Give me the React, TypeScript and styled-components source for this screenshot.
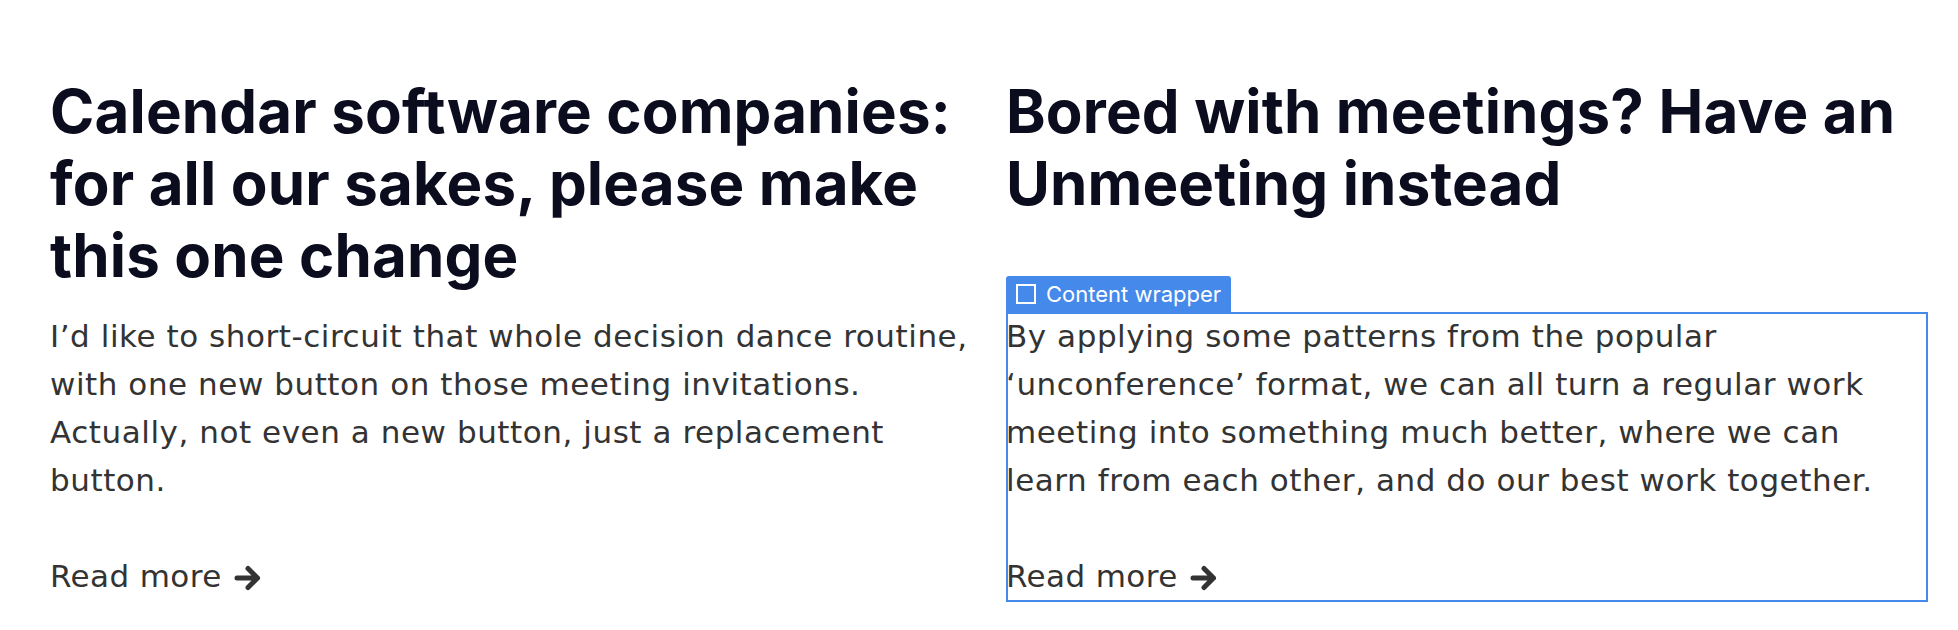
import React from "react";
import styled, { createGlobalStyle } from "styled-components";

const GlobalStyle = createGlobalStyle`
  html, body {
    margin: 0;
    padding: 0;
    background: #ffffff;
  }
  body {
    font-family: "DejaVu Sans", "Noto Sans", sans-serif;
    -webkit-font-smoothing: antialiased;
  }
  * { box-sizing: border-box; }
`;

const Page = styled.main`
  width: 1958px;
  padding: 75px 30px 0 50px;
`;

const Grid = styled.section`
  display: grid;
  grid-template-columns: 922px 922px;
  column-gap: 34px;
`;

const Card = styled.article`
  display: flex;
  flex-direction: column;
  min-width: 0;
`;

const Title = styled.h2`
  margin: 0 0 21px;
  font-family: "Inter", "Open Sans", sans-serif;
  font-weight: 700;
  font-size: 60px;
  line-height: 72px;
  letter-spacing: 0.15px;
  color: #0b0c1e;
`;

const ContentWrapper = styled.div<{ $selected?: boolean }>`
  position: relative;
  margin-top: auto;
  display: flex;
  flex-direction: column;
  width: 100%;
  padding-bottom: 2px;

  &::after {
    content: "";
    display: ${(p) => (p.$selected ? "block" : "none")};
    position: absolute;
    inset: 0;
    border: 2px solid #4589eb;
    pointer-events: none;
  }
`;

const SelectionLabel = styled.div`
  position: absolute;
  left: 0;
  bottom: 100%;
  height: 36px;
  display: flex;
  align-items: center;
  gap: 10px;
  padding: 0 10px;
  background: #4589eb;
  border-radius: 3px 3px 0 0;
  color: #ffffff;
  font-family: "Inter", "Noto Sans", sans-serif;
  font-size: 22px;
  line-height: 36px;
  white-space: nowrap;
`;

const LabelIcon = styled.span`
  width: 20px;
  height: 20px;
  border: 2px solid #ffffff;
  flex: none;
`;

const Excerpt = styled.p`
  margin: 0;
  width: 100%;
  font-family: "DejaVu Sans", "Noto Sans", sans-serif;
  font-size: 31px;
  line-height: 48px;
  letter-spacing: 0.55px;
  color: #333333;
`;

const ReadMore = styled.a`
  align-self: flex-start;
  margin-top: 48px;
  display: inline-flex;
  align-items: center;
  gap: 12px;
  font-family: "DejaVu Sans", "Noto Sans", sans-serif;
  font-size: 31px;
  line-height: 48px;
  letter-spacing: 0.4px;
  color: #333333;
  text-decoration: none;
`;

const ArrowIcon = styled.svg`
  width: 27px;
  height: 26px;
  flex: none;
  margin-top: 3px;
`;

const Arrow = () => (
  <ArrowIcon viewBox="0 0 27 26" aria-hidden="true">
    <path
      d="M3 13 H23.5 M14 3.5 L23.5 13 L14 22.5"
      fill="none"
      stroke="#333333"
      strokeWidth="5"
      strokeLinecap="round"
      strokeLinejoin="round"
    />
  </ArrowIcon>
);

type Post = {
  title: string;
  excerpt: string;
  selected?: boolean;
};

const posts: Post[] = [
  {
    title: "Calendar software companies: for all our sakes, please make this one change",
    excerpt:
      "I\u2019d like to short-circuit that whole decision dance routine, with one new button on those meeting invitations. Actually, not even a new button, just a replacement button.",
  },
  {
    title: "Bored with meetings? Have an Unmeeting instead",
    excerpt:
      "By applying some patterns from the popular \u2018unconference\u2019 format, we can all turn a regular work meeting into something much better, where we can learn from each other, and do our best work together.",
    selected: true,
  },
];

export default function App() {
  return (
    <>
      <GlobalStyle />
      <Page>
        <Grid>
          {posts.map((post) => (
            <Card key={post.title}>
              <Title>{post.title}</Title>
              <ContentWrapper $selected={post.selected}>
                {post.selected && (
                  <SelectionLabel>
                    <LabelIcon />
                    Content wrapper
                  </SelectionLabel>
                )}
                <Excerpt>{post.excerpt}</Excerpt>
                <ReadMore href="#">
                  Read more
                  <Arrow />
                </ReadMore>
              </ContentWrapper>
            </Card>
          ))}
        </Grid>
      </Page>
    </>
  );
}
